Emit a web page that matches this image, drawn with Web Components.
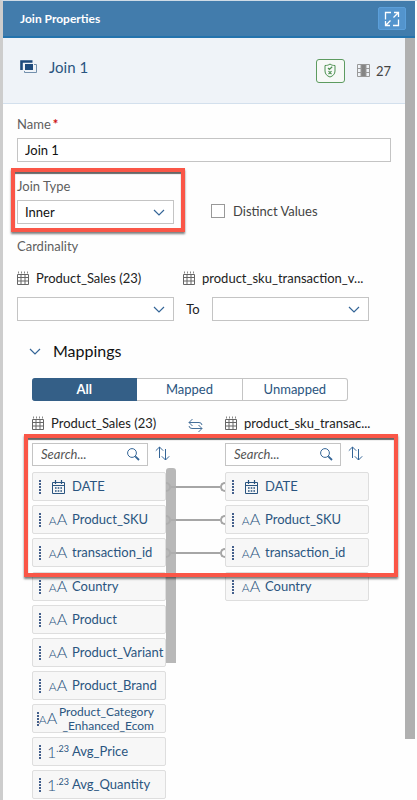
<!DOCTYPE html>
<html lang="en">
<head>
<meta charset="utf-8">
<meta name="viewport" content="width=device-width, initial-scale=1">
<title>Join Properties</title>
<style>
  body {
    margin: 0;
    background: #fefefe;
    font: 13px/16px Lato, "Liberation Sans", sans-serif;
    color: #222;
    --navy: #2a5580;
    --line: #c4c4c4;
    --muted: #5f5f5f;
    --thumb: #b0b0b0;
    --alert: #fa5647;
  }
</style>
</head>
<body>
<join-panel></join-panel>

<script>
const BASE = `*, *::before, *::after { box-sizing: border-box; }
  button, input, select { font: inherit; color: inherit; margin: 0; border-radius: 0; }
  :host([hidden]) { display: none; }`;

function define(name, render, css) {
  customElements.define(name, class extends HTMLElement {
    connectedCallback() {
      if (this.shadowRoot) return;
      const root = this.attachShadow({ mode: "open" });
      const t = document.createElement("template");
      t.innerHTML = `<style>${BASE}${css}</style>${render(this)}`;
      root.append(t.content.cloneNode(true));
    }
  });
}
const attr = (el, n) => el.getAttribute(n) || "";

const ICONS = {
  join: [18, 14, `<path d="M1.500 10V1.500h11" stroke="#1d4a7c" stroke-width="2.600" fill="none"/><path d="M5 4h8v6H5z" fill="#1d4a7c"/><path d="M14 4.500h2.500v8h-12v-1.500" stroke="#7390ad" fill="none"/>`],
  expand: [16, 16, `<g fill="none" stroke="#fff" stroke-width="1.3"><path d="M1.500 8.500V1.500H7M14.500 8.500v6H9"/><path d="M9.500 6.500 14.500 1.500M10 1.500h4.500V6M6.500 9.500l-5 5M1.500 10v4.500H6"/></g>`],
  shield: [12, 15, `<g fill="none" stroke="#4d9150"><path d="M6 1C4.500 2.200 3 2.500 1 2.500V8c0 3 2 5 5 6 3-1 5-3 5-6V2.500C9 2.500 7.500 2.200 6 1z"/><path stroke-width="1.200" d="M4 5 5.400 6.400 8.200 3.800M4.500 8.200l3 3M7.500 8.200l-3 3"/></g>`],
  columns: [13, 13, `<rect x="4" y="0" width="5" height="13" fill="#858585"/><path d="M.5.5h12v12H.5zM.5 4.500h4M.5 8.500h4M8.500 4.500h4M8.500 8.500h4M4 .5v12M9 .5v12" fill="none" stroke="#999"/>`],
  table: [12, 14, `<path d="M.5 3.500h11v10H.5zM.5 6.500h11M.5 10h11M4 3.500v10M8 3.500v10" fill="none" stroke="#666"/><path d="M1.500.5v2M4.500.5v2M7.500.5v2M10.500.5v2" stroke="#888" fill="none"/>`],
  chevron: [12, 7, `<path d="M1 1l5 5 5-5" fill="none" stroke="#346597" stroke-width="1.200"/>`],
  swap: [15, 15, `<g fill="none" stroke="#456f99"><path d="M4.500 1 1 4.500 4.500 8M1 4.500h10a3 3 0 0 1 3 2.500"/><path d="M10.500 14 14 10.500 10.500 7M14 10.500H4A3 3 0 0 1 1 8"/></g>`],
  search: [13, 13, `<circle cx="5" cy="5" r="4.400" fill="none" stroke="#346597"/><path d="M8.300 8.300 12 12" stroke="#346597" stroke-width="1.800"/>`],
  sort: [15, 15, `<g fill="none" stroke="#346597"><path d="M4.500 12V1M.8 4.700 4.500 1l3.700 3.700"/><path d="M10.500 3v11M6.800 10.300l3.700 3.700 3.700-3.700"/></g>`],
  date: [13, 14, `<path d="M.5 2.500h12v11H.5zM.5 5.500h12" fill="none" stroke="#2a5580"/><path d="M3.500 0v4M9.500 0v4" stroke="#2a5580" stroke-width="1.200"/><path d="M3 8h1.600M5.700 8h1.600M8.400 8H10M3 11h1.600M5.700 11h1.600M8.400 11H10" stroke="#2a5580" stroke-width="1.700"/>`]
};

define("ui-icon", el => {
  const [w, h, art] = ICONS[attr(el, "name")];
  return `<svg width="${w}" height="${h}" viewBox="0 0 ${w} ${h}" aria-hidden="true">${art}</svg>`;
}, `:host { display: inline-flex; flex: none; } svg { display: block; }`);

define("panel-header", () => `
  <h1><slot></slot></h1>
  <button type="button" aria-label="Expand"><ui-icon name="expand"></ui-icon></button>`,
  `:host { display: flex; align-items: center; justify-content: space-between; height: 37px;
     padding: 0 9px 0 17px; background: #427cac; border-bottom: 2px solid #2473ad; color: #fff; }
   h1 { margin: 0; font-size: 12px; font-weight: 700; }
   button { display: grid; place-items: center; width: 28px; height: 23px; padding: 0;
     border: 1px solid #5b9fda; border-radius: 2px; background: #5394cd; }`);

define("node-summary", () => `
  <div><ui-icon name="join"></ui-icon><h2><slot></slot></h2></div>
  <button type="button" aria-label="Validation passed"><ui-icon name="shield"></ui-icon></button>
  <span class="count"><ui-icon name="columns"></ui-icon><slot name="count"></slot></span>`,
  `:host { display: flex; align-items: center; height: 66px; padding: 0 14px 0 17px;
     background: #eff3f8; border-bottom: 1px solid #d3e0ed; }
   div { flex: 1; display: flex; align-items: center; gap: 11px; padding-bottom: 8px; }
   h2 { margin: 0; font-size: 15px; font-weight: 400; color: var(--navy); }
   button { display: grid; place-items: center; width: 29px; height: 24px; padding: 0;
     border: 1px solid #5d9b60; border-radius: 3px; background: #f7f9f7; }
   .count { display: flex; align-items: center; gap: 6px; margin-left: 12px; color: #444; }`);

define("text-field", el => `
  <label for="f">${attr(el, "label")}${el.hasAttribute("required") ? `<b>*</b>` : ""}</label>
  <input id="f" type="text" value="${attr(el, "value")}">`,
  `:host { display: grid; gap: 6px; }
   label { color: var(--muted); } b { color: #c11; margin-left: 2px; }
   input { width: 100%; height: 24px; padding: 0 7px; border: 1px solid var(--line); background: #fff; color: #111; }`);

define("select-field", el => {
  const label = attr(el, "label");
  return `${label ? `<label for="s">${label}</label>` : ""}
  <div><select id="s" ${label ? "" : `aria-label="${attr(el, "hint")}"`}>
    ${attr(el, "options").split("|").map(o => `<option>${o}</option>`).join("")}</select>
    <ui-icon name="chevron"></ui-icon></div>`;
  }, `:host { display: grid; gap: 6px; min-width: 0; }
   label { color: var(--muted); }
   div { display: grid; align-items: center; }
   select, ui-icon { grid-area: 1 / 1; }
   select { appearance: none; width: 100%; height: 24px; padding: 0 28px 1px 7px;
     border: 1px solid var(--line); background: #fff; color: #111; }
   ui-icon { justify-self: end; margin-right: 9px; pointer-events: none; }`);

define("check-field", () => `<label><input type="checkbox"><slot></slot></label>`,
  `label { display: flex; align-items: center; gap: 8px; color: #444; }
   input { appearance: none; width: 14px; height: 14px; border: 1px solid #999; background: #fff; }`);

define("callout-frame", () => `<slot></slot>`,
  `:host { display: block; position: relative; }
   :host::after { content: ""; position: absolute; z-index: 2; pointer-events: none;
     inset: var(--frame-inset); border: 4px solid var(--alert);
     box-shadow: 0 2px 2px rgba(0,0,0,.5), inset 0 2px 1px rgba(0,0,0,.6); }`);

define("source-label", () => `<ui-icon name="table"></ui-icon><span><slot></slot></span>`,
  `:host { display: flex; align-items: center; gap: 7px; min-width: 0; white-space: nowrap; }`);

define("filter-tabs", () => `
  <button type="button" aria-pressed="true">All</button>
  <button type="button" aria-pressed="false">Mapped</button>
  <button type="button" aria-pressed="false">Unmapped</button>`,
  `:host { display: grid; grid-template-columns: repeat(3, 1fr); height: 23px; }
   button { padding: 0 0 2px; border: 1px solid var(--line); border-left-width: 0; background: #fff; color: var(--navy); }
   button:first-of-type { border-radius: 3px 0 0 3px; }
   button:last-of-type { border-radius: 0 3px 3px 0; }
   button[aria-pressed=true] { background: #345f87; border-color: #345f87; color: #fff; font-weight: 700; }`);

define("search-field", el => `
  <div><input type="text" placeholder="Search..." aria-label="${attr(el, "label")}">
  <ui-icon name="search"></ui-icon></div>
  <button type="button" aria-label="Sort"><ui-icon name="sort"></ui-icon></button>`,
  `:host { display: flex; align-items: center; gap: 7px; min-width: 0; }
   div { display: grid; align-items: center; flex: 0 1 116px; min-width: 0; }
   input, div ui-icon { grid-area: 1 / 1; }
   input { width: 100%; height: 23px; padding: 0 26px 2px 8px; border: 1px solid var(--line); background: #fff; }
   input::placeholder { color: #555; font-style: italic; opacity: 1; }
   div ui-icon { justify-self: end; margin-right: 8px; }
   button { padding: 0; border: 0; background: none; }`);

define("column-item", el => {
  const kind = attr(el, "type");
  const mark = kind === "date" ? `<ui-icon name="date"></ui-icon>`
    : kind === "number" ? `1<sup>.23</sup>` : `<small>A</small>A`;
  return `<i></i><span class="mark ${kind}">${mark}</span><span class="name"><slot></slot></span>`;
  }, `:host { display: flex; align-items: center; height: 29px; padding-left: 6px;
     border: 1px solid #dedede; border-radius: 2px; background: #f7f7f7; color: var(--navy); }
   i { flex: none; width: 2px; height: 14px; margin-right: 8px;
     background: repeating-linear-gradient(#44608c 0 2px, transparent 2px 3px); }
   .mark { display: flex; align-items: baseline; justify-content: center; flex: none; width: 18px; margin-right: 5px; font-size: 16px; font-weight: 300; }
   small { font-size: 12px; } sup { font-size: 9px; line-height: 9px; font-weight: 400; align-self: flex-start; }
   .name { white-space: nowrap; padding-bottom: 2px; }
   :host([wrap]) { padding-left: 4px; line-height: 14px; }
   :host([wrap]) i, :host([wrap]) .mark { margin-right: 0; }
   :host([wrap]) .name { font-size: 12px; white-space: normal; text-align: right; padding: 0 0 0 2px; }`);

define("column-list", () => `<slot></slot>`,
  `:host { display: flex; flex-direction: column; gap: 4px; min-width: 0; }`);

define("link-line", () => `<i></i><hr><i class="end"></i>`,
  `:host { display: flex; align-items: center; height: 29px; }
   i { width: 5px; height: 10px; border: 2px solid #a6a6a6; border-left: 0; border-radius: 0 5px 5px 0; }
   .end { border: 2px solid #a6a6a6; border-right: 0; border-radius: 5px 0 0 5px; }
   hr { flex: 1; height: 2px; margin: 0; border: 0; background: #a6a6a6; }`);

define("link-area", () => `<slot></slot><div></div>`,
  `:host { display: flex; flex-direction: column; gap: 4px; position: relative; }
   div { position: absolute; left: 0; top: -4px; width: 10px; height: 195px;
     border-radius: 3px 3px 0 0; background: rgba(174,174,174,.88); }`);

define("mapping-section", () => `
  <h3><ui-icon name="chevron"></ui-icon>Mappings</h3>
  <filter-tabs></filter-tabs>
  <div class="pair names">
    <source-label>Product_Sales (23)</source-label>
    <button type="button" aria-label="Swap sources"><ui-icon name="swap"></ui-icon></button>
    <source-label>product_sku_transac...</source-label>
  </div>
  <callout-frame>
    <div class="pair search">
      <search-field label="Search left columns"></search-field>
      <search-field class="right" label="Search right columns"></search-field>
    </div>
    <div class="pair mapped">
      <column-list>
        <column-item type="date">DATE</column-item>
        <column-item type="text">Product_SKU</column-item>
        <column-item type="text">transaction_id</column-item>
      </column-list>
      <link-area><link-line></link-line><link-line></link-line><link-line></link-line></link-area>
      <column-list>
        <column-item type="date">DATE</column-item>
        <column-item type="text">Product_SKU</column-item>
        <column-item type="text">transaction_id</column-item>
      </column-list>
    </div>
  </callout-frame>
  <div class="pair rest">
    <column-list>
      <column-item type="text">Country</column-item>
      <column-item type="text">Product</column-item>
      <column-item type="text">Product_Variant</column-item>
      <column-item type="text">Product_Brand</column-item>
      <column-item type="text" wrap>Product_Category<br>_Enhanced_Ecom</column-item>
      <column-item type="number">Avg_Price</column-item>
      <column-item type="number">Avg_Quantity</column-item>
    </column-list>
    <column-list class="right"><column-item type="text">Country</column-item></column-list>
  </div>`,
  `:host { display: block; margin-top: 18px; padding: 0 22px 0 15px; }
   h3 { display: flex; align-items: center; gap: 12px; margin: 0 0 15px -3px; font-size: 16px; line-height: 24px; font-weight: 400; color: #111; }
   filter-tabs { margin-right: 21px; }
   .pair { display: grid; grid-template-columns: minmax(0, 134fr) 59px minmax(0, 144fr); }
   .names { margin: 14px 0 12px; }
   .names button { display: grid; place-items: center; padding: 3px 0 0; height: 16px; border: 0; background: none; }
   .search { margin-bottom: 6px; }
   .right { grid-column: 3; }
   .rest { margin-top: 5px; }
   callout-frame { --frame-inset: -9px -29px -10px -8px; }
   search-field { margin-right: -5px; }`);

define("join-form", () => `
  <text-field label="Name" required value="Join 1"></text-field>
  <div class="type">
    <callout-frame><select-field label="Join Type" options="Inner|Left|Right|Full"></select-field></callout-frame>
    <check-field>Distinct Values</check-field>
  </div>
  <div class="caption">Cardinality</div>
  <div class="sources">
    <source-label>Product_Sales (23)</source-label>
    <source-label>product_sku_transaction_v...</source-label>
  </div>
  <div class="card">
    <select-field hint="Left cardinality" options="|One|Many"></select-field>
    <span>To</span>
    <select-field hint="Right cardinality" options="|One|Many"></select-field>
  </div>
  <mapping-section></mapping-section>`,
  `:host { display: block; padding: 12px 14px 0; }
   .type { display: grid; grid-template-columns: minmax(0, 157fr) minmax(0, 180fr); column-gap: 37px; align-items: end; margin-top: 16px; }
   check-field { margin-bottom: 5px; }
   callout-frame { --frame-inset: -10px -11px -8px -6px; }
   .caption { margin: 14px 0 16px; color: var(--muted); }
   .sources { display: grid; grid-template-columns: minmax(0, 166fr) minmax(0, 180fr); margin-right: 28px; }
   .card { display: grid; grid-template-columns: minmax(0, 1fr) 38px minmax(0, 1fr); align-items: center; margin: 11px 22px 0 0; }
   .card span { text-align: center; }`);

define("join-panel", () => `
  <panel-header>Join Properties</panel-header>
  <main><div><node-summary>Join 1<span slot="count">27</span></node-summary><join-form></join-form></div>
  <i></i></main>`,
  `:host { display: block; min-height: 100vh; border-top: 1px solid #cfdbe6; border-left: 3px solid #cdcdcd; padding-right: 2px; box-sizing: border-box; }
   main { display: grid; grid-template-columns: minmax(0, 1fr) 10px; }
   i { height: 701px; background: var(--thumb); }`);
</script>
</body>
</html>
